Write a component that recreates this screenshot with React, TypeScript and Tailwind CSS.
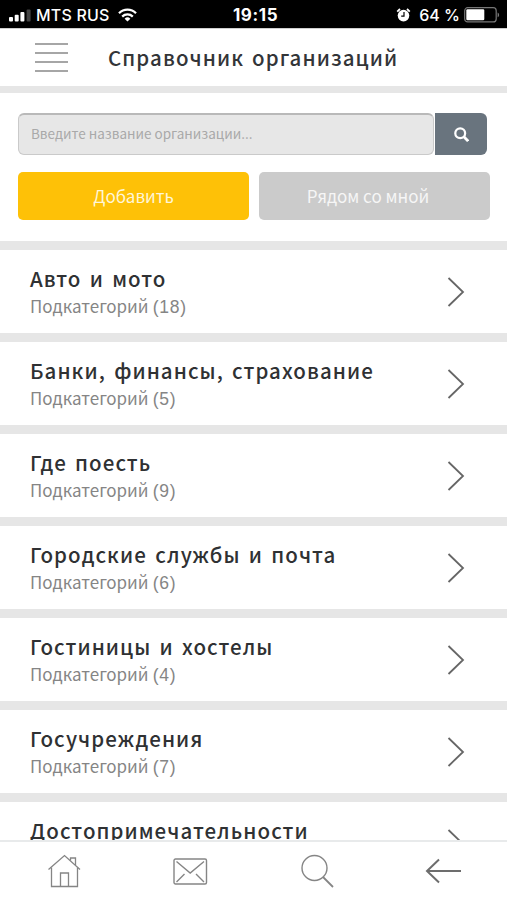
import React from 'react';

interface Category {
  id: number;
  title: string;
  count: number;
}

const categories: Category[] = [
  { id: 1, title: 'Авто и мото', count: 18 },
  { id: 2, title: 'Банки, финансы, страхование', count: 5 },
  { id: 3, title: 'Где поесть', count: 9 },
  { id: 4, title: 'Городские службы и почта', count: 6 },
  { id: 5, title: 'Гостиницы и хостелы', count: 4 },
  { id: 6, title: 'Госучреждения', count: 7 },
  { id: 7, title: 'Достопримечательности', count: 12 },
];

const StatusBar: React.FC = () => (
  <div className="grid h-7 shrink-0 grid-cols-[1fr_auto_1fr] items-center bg-black pl-[9px] pr-[7px] pt-[2px] font-['Inter',sans-serif] text-[16px] leading-none text-white">
    <div className="flex items-center">
      <svg width="22" height="13" viewBox="0 0 22 13" fill="#fff">
        <rect x="0" y="8" width="4" height="4.5" rx="1" />
        <rect x="5.7" y="5.8" width="4" height="6.7" rx="1" />
        <rect x="11.4" y="3" width="4" height="9.5" rx="1" />
        <rect x="17.6" y="0.5" width="4" height="12" rx="1" fill="#444" />
      </svg>
      <span className="ml-[5px] font-medium tracking-[0.2px]">MTS RUS</span>
      <svg className="ml-[8px]" width="19" height="14" viewBox="0 0 19 14" fill="none" stroke="#fff" strokeWidth="2.3">
        <path d="M1 5.2a12 12 0 0 1 17 0" />
        <path d="M4.2 8.6a7.6 7.6 0 0 1 10.6 0" />
        <path d="M9.5 13.5L6.6 10.7a4.2 4.2 0 0 1 5.8 0z" fill="#fff" stroke="none" />
      </svg>
    </div>
    <span className="pl-[2px] text-[17px] font-bold tracking-[0.6px]">19:15</span>
    <div className="flex items-center justify-end">
      <svg width="15" height="14" viewBox="0 0 15 14">
        <circle cx="7.5" cy="7.6" r="5.8" fill="#fff" />
        <path d="M1.2 3.6L4 1M13.8 3.6L11 1" stroke="#fff" strokeWidth="1.8" />
        <path d="M8 4v4.1H5.2" fill="none" stroke="#000" strokeWidth="1.2" />
      </svg>
      <span className="ml-[8px] font-medium">64 %</span>
      <svg className="ml-[4px]" width="36" height="16" viewBox="0 0 36 16">
        <rect x="0.7" y="0.7" width="31.5" height="14.2" rx="3" fill="none" stroke="#777" strokeWidth="1.2" />
        <rect x="2.3" y="2.3" width="18" height="11" rx="1.2" fill="#fff" />
        <path d="M33.6 5.4c2 .8 2 4 0 4.8z" fill="#777" />
      </svg>
    </div>
  </div>
);

const Header: React.FC = () => (
  <header className="flex h-[58px] shrink-0 items-center border-t border-[#cfcfcf] pl-[35px]">
    <button className="flex h-[30px] w-[33px] flex-col justify-between">
      <span className="h-[2px] w-full bg-[#a6a6a6]" />
      <span className="h-[2px] w-full bg-[#a6a6a6]" />
      <span className="h-[2px] w-full bg-[#a6a6a6]" />
      <span className="h-[2px] w-full bg-[#a6a6a6]" />
    </button>
    <h1 className="ml-[40px] whitespace-nowrap pb-[2px] text-[20.5px] font-medium leading-[30px] tracking-[1.1px] text-[#333538] [word-spacing:2px]">
      Справочник организаций
    </h1>
  </header>
);

const SearchPanel: React.FC = () => (
  <section className="h-[155px] shrink-0 border-t-[7px] border-[#e6e6e6] pl-[18px] pt-[20px]">
    <div className="flex gap-[1px]">
      <div className="flex h-[42px] w-[416px] items-center rounded-[6px] border border-t-2 border-[#cacaca] border-t-[#b9b9b9] bg-[#e7e7e7] pb-[2px] pl-[12px] text-[13.5px] text-[#a9a9a9]">
        Введите название организации...
      </div>
      <button className="flex h-[42px] w-[52px] items-center justify-center rounded-r-[6px] bg-[#69747e]">
        <svg width="15" height="15" viewBox="0 0 14 14" fill="none" stroke="#fff" strokeWidth="2.1">
          <circle cx="5.8" cy="5.8" r="4.6" />
          <path d="M9.2 9.2L13.2 13.2" strokeWidth="2.6" />
        </svg>
      </button>
    </div>
    <div className="mt-[17px] flex gap-[10px] text-[17px] text-white [word-spacing:3px]">
      <button className="h-[48px] w-[231px] rounded-[5px] bg-[#fec107] text-[#fff6d8]">Добавить</button>
      <button className="h-[48px] w-[231px] rounded-[5px] bg-[#cbcbcb] pr-[13px] text-[#f6f6f6]">Рядом со мной</button>
    </div>
  </section>
);

const CategoryRow: React.FC<{ category: Category }> = ({ category }) => (
  <li className="flex h-[92px] shrink-0 items-center justify-between border-t-[9px] border-[#e6e6e6] pl-[30px] pr-[42px]">
    <div className="whitespace-nowrap">
      <h2 className="text-[20.5px] font-medium leading-[28px] tracking-[1.06px] text-[#2f3133] [word-spacing:2.6px]">
        {category.title}
      </h2>
      <p className="mt-[1px] text-[17px] leading-[26px] text-[#858585] [word-spacing:0.5px]">
        Подкатегорий{' '}
        <span className="font-['Liberation_Sans',sans-serif] text-[17.5px] tracking-[0.7px]">({category.count})</span>
      </p>
    </div>
    <svg width="18" height="32" viewBox="0 0 18 32" fill="none" stroke="#666" strokeWidth="1.8">
      <path d="M1.5 2L16 16L1.5 30" />
    </svg>
  </li>
);

const BottomNav: React.FC = () => (
  <nav className="flex h-[60px] shrink-0 items-center border-t-2 border-[#e8eaeb] bg-white pl-[48px]">
    <svg width="33" height="34" viewBox="0 0 33 34" fill="none" stroke="#858585" strokeWidth="1.3">
      <path d="M0.5 15.5L16.5 1.5L32 15.5" />
      <path d="M3.5 13.5v19h26v-19" />
      <path d="M12.5 32.5V19h8v13.5M22.5 6.5V4h5v7" />
    </svg>
    <svg className="ml-[92px]" width="35" height="27" viewBox="0 0 35 27" fill="none" stroke="#858585" strokeWidth="1.4">
      <rect x="1" y="1" width="32.5" height="25" rx="1.5" />
      <path d="M3.5 3.5L17.2 15L31 3.5M3.5 24l8-8M31 24l-8-8" />
    </svg>
    <svg className="ml-[93px]" width="33" height="34" viewBox="0 0 33 34" fill="none" stroke="#858585" strokeWidth="1.4">
      <circle cx="13.5" cy="14" r="12.5" />
      <path d="M22 23L32 33" strokeWidth="1.8" />
    </svg>
    <svg className="ml-[91px]" width="37" height="26" viewBox="0 0 37 26" fill="none" stroke="#6d6d6d" strokeWidth="2">
      <path d="M36 13H2M14 1.5L2 13L14 24.5" />
    </svg>
  </nav>
);

const App: React.FC = () => {
  return (
    <div className="flex h-[900px] w-[507px] flex-col overflow-hidden bg-white font-['Noto_Sans_CJK_SC',sans-serif]">
      <StatusBar />
      <Header />
      <SearchPanel />
      <ul className="min-h-0 flex-1 overflow-hidden">
        {categories.map(category => (
          <CategoryRow key={category.id} category={category} />
        ))}
      </ul>
      <BottomNav />
    </div>
  );
};

export default App;
